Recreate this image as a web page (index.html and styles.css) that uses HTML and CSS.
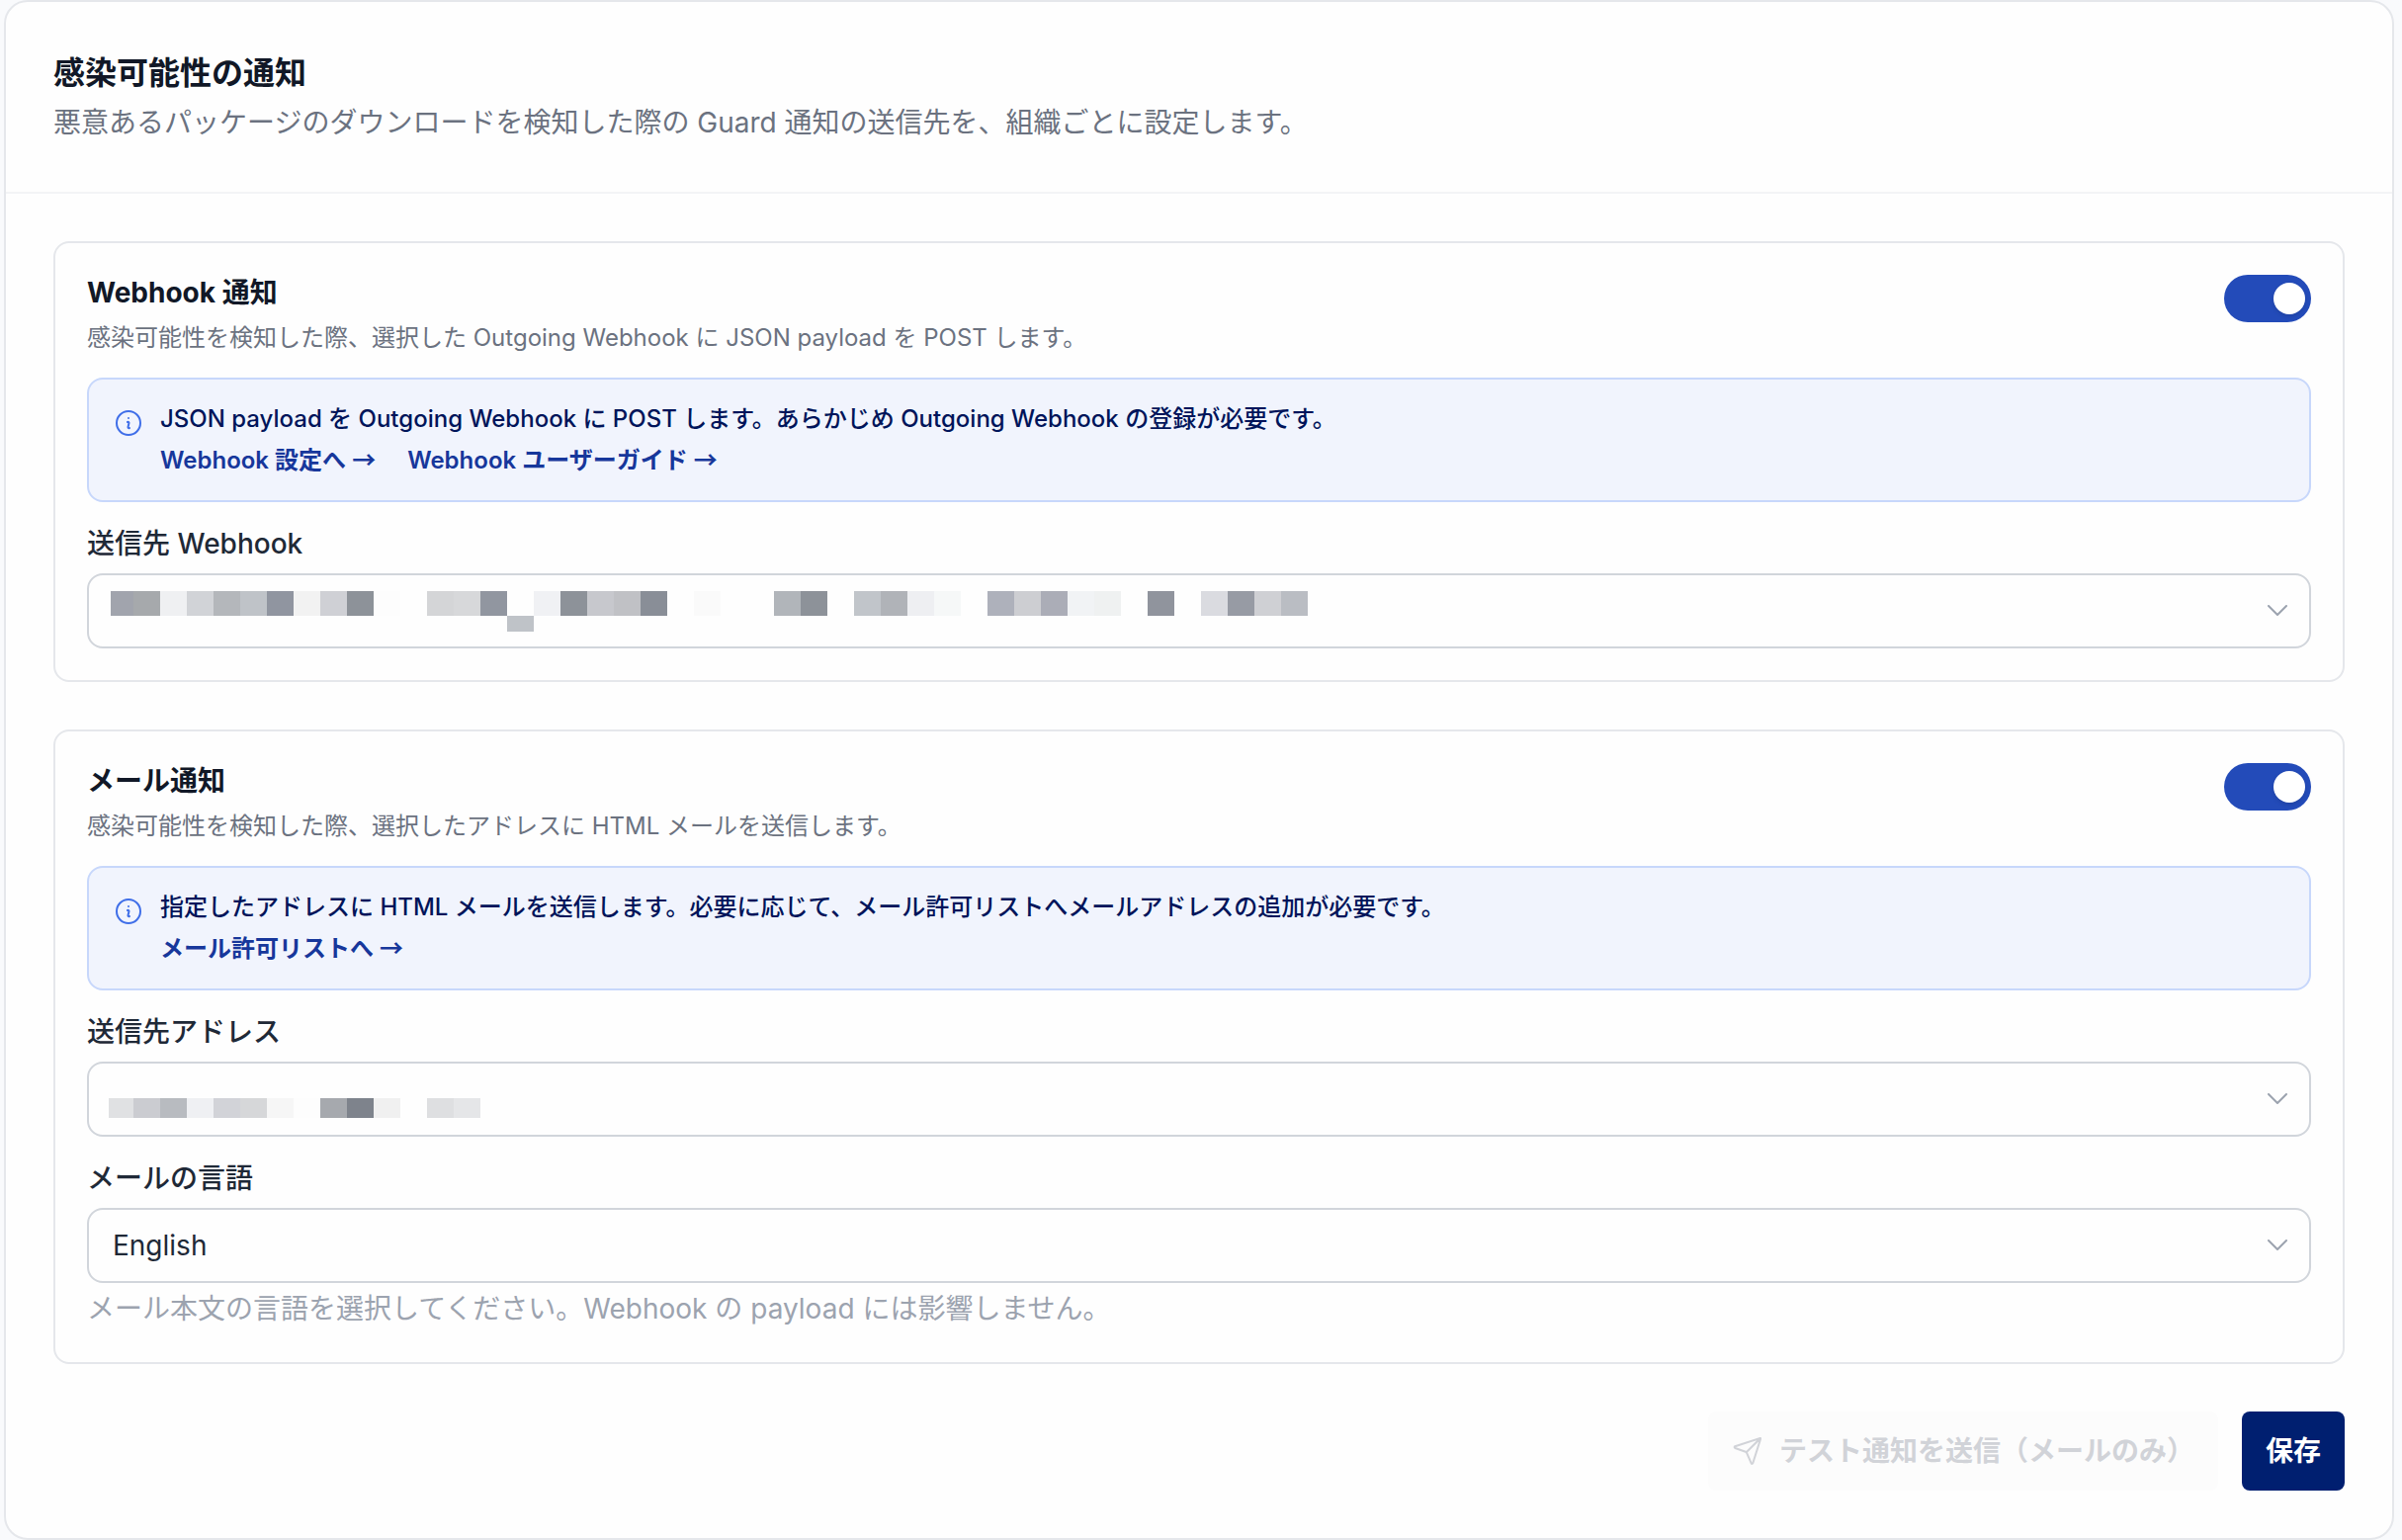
FILE: index.html
```html
<!DOCTYPE html>
<html lang="ja">
<head>
<meta charset="utf-8">
<meta name="viewport" content="width=device-width, initial-scale=1">
<title>感染可能性の通知</title>
<link rel="stylesheet" href="styles.css">
</head>
<body>
<main class="panel">
  <header class="panel-header">
    <h1 class="panel-title">感染可能性の通知</h1>
    <p class="panel-lead">悪意あるパッケージのダウンロードを検知した際の Guard 通知の送信先を、組織ごとに設定します。</p>
  </header>
  <form class="panel-body">
    <section class="card">
      <div class="card-header">
        <div>
          <h2 class="card-title"><label for="webhook-on">Webhook 通知</label></h2>
          <p class="card-lead">感染可能性を検知した際、選択した Outgoing Webhook に JSON payload を POST します。</p>
        </div>
        <input class="toggle" type="checkbox" role="switch" id="webhook-on" checked>
      </div>
      <div class="callout">
        <svg class="callout-icon" viewBox="0 0 24 24" aria-hidden="true"><path d="m11.25 11.25.041-.02a.75.75 0 0 1 1.063.852l-.708 2.836a.75.75 0 0 0 1.063.853l.041-.021M21 12a9 9 0 1 1-18 0 9 9 0 0 1 18 0Zm-9-3.75h.008v.008H12V8.25Z"/></svg>
        <div>
          <p class="callout-text">JSON payload を Outgoing Webhook に POST します。あらかじめ Outgoing Webhook の登録が必要です。</p>
          <div class="callout-links">
            <a href="#webhook-settings">Webhook 設定へ <span class="arrow">→</span></a>
            <a href="#webhook-guide">Webhook ユーザーガイド <span class="arrow">→</span></a>
          </div>
        </div>
      </div>
      <div class="field">
        <label class="field-label" for="webhook-target">送信先 Webhook</label>
        <div class="select-wrap">
          <select class="select" id="webhook-target"><option></option></select>
          <svg class="redacted" width="1236" height="72" aria-hidden="true" shape-rendering="crispEdges">
            <g>
              <rect x="22" y="16" width="23" height="25" fill="#a1a4ad"/><rect x="45" y="16" width="27" height="25" fill="#a6a9ac"/><rect x="72" y="16" width="27" height="25" fill="#eff0f2"/><rect x="99" y="16" width="27" height="25" fill="#d1d3d7"/><rect x="126" y="16" width="27" height="25" fill="#b4b7bb"/><rect x="153" y="16" width="27" height="25" fill="#bfc3c8"/><rect x="180" y="16" width="27" height="25" fill="#9095a0"/><rect x="207" y="16" width="27" height="25" fill="#f2f2f2"/><rect x="234" y="16" width="27" height="25" fill="#cfd0d5"/><rect x="261" y="16" width="27" height="25" fill="#8d9299"/><rect x="288" y="16" width="27" height="25" fill="#fdfdfd"/>
              <rect x="342" y="16" width="27" height="25" fill="#d4d5d7"/><rect x="369" y="16" width="27" height="25" fill="#d7d8da"/><rect x="396" y="16" width="27" height="25" fill="#9196a0"/><rect x="423" y="41" width="27" height="16" fill="#bfc3c8"/><rect x="450" y="16" width="27" height="25" fill="#f0f1f4"/><rect x="477" y="16" width="27" height="25" fill="#8d9299"/><rect x="504" y="16" width="27" height="25" fill="#c7c8cd"/><rect x="531" y="16" width="27" height="25" fill="#c0c1c5"/><rect x="558" y="16" width="27" height="25" fill="#898e97"/><rect x="612" y="16" width="27" height="25" fill="#fafafa"/>
              <rect x="693" y="16" width="27" height="25" fill="#b1b5ba"/><rect x="720" y="16" width="27" height="25" fill="#8d9299"/><rect x="774" y="16" width="27" height="25" fill="#c1c5ca"/><rect x="801" y="16" width="27" height="25" fill="#b0b3b8"/><rect x="828" y="16" width="27" height="25" fill="#eeeff2"/><rect x="855" y="16" width="27" height="25" fill="#f6f8f8"/>
              <rect x="909" y="16" width="27" height="25" fill="#aeb1bb"/><rect x="936" y="16" width="27" height="25" fill="#cdced2"/><rect x="963" y="16" width="27" height="25" fill="#abadb7"/><rect x="990" y="16" width="27" height="25" fill="#f1f3f5"/><rect x="1017" y="16" width="27" height="25" fill="#eff1f1"/><rect x="1071" y="16" width="27" height="25" fill="#90949d"/><rect x="1125" y="16" width="27" height="25" fill="#dadbe0"/><rect x="1152" y="16" width="27" height="25" fill="#979ba4"/><rect x="1179" y="16" width="27" height="25" fill="#cfd0d4"/><rect x="1206" y="16" width="27" height="25" fill="#babdc3"/>
            </g>
          </svg>
          <svg class="chevron" viewBox="0 0 20 12" aria-hidden="true"><path d="m1 1 9 9 9-9"/></svg>
        </div>
      </div>
    </section>

    <section class="card">
      <div class="card-header">
        <div>
          <h2 class="card-title"><label for="mail-on">メール通知</label></h2>
          <p class="card-lead">感染可能性を検知した際、選択したアドレスに HTML メールを送信します。</p>
        </div>
        <input class="toggle" type="checkbox" role="switch" id="mail-on" checked>
      </div>
      <div class="callout">
        <svg class="callout-icon" viewBox="0 0 24 24" aria-hidden="true"><path d="m11.25 11.25.041-.02a.75.75 0 0 1 1.063.852l-.708 2.836a.75.75 0 0 0 1.063.853l.041-.021M21 12a9 9 0 1 1-18 0 9 9 0 0 1 18 0Zm-9-3.75h.008v.008H12V8.25Z"/></svg>
        <div>
          <p class="callout-text">指定したアドレスに HTML メールを送信します。必要に応じて、メール許可リストへメールアドレスの追加が必要です。</p>
          <div class="callout-links">
            <a href="#mail-allowlist">メール許可リストへ <span class="arrow">→</span></a>
          </div>
        </div>
      </div>
      <div class="field">
        <label class="field-label" for="mail-target">送信先アドレス</label>
        <div class="select-wrap">
          <select class="select" id="mail-target"><option></option></select>
          <svg class="redacted" width="440" height="72" aria-hidden="true" shape-rendering="crispEdges">
            <g>
              <rect x="20" y="35" width="25" height="20" fill="#e0e1e3"/><rect x="45" y="35" width="27" height="20" fill="#cbccd1"/><rect x="72" y="35" width="27" height="20" fill="#b8bbc0"/><rect x="99" y="35" width="27" height="20" fill="#eff0f3"/><rect x="126" y="35" width="27" height="20" fill="#d2d3d8"/><rect x="153" y="35" width="27" height="20" fill="#d6d7d9"/><rect x="180" y="35" width="27" height="20" fill="#f6f6f6"/><rect x="207" y="35" width="27" height="20" fill="#fdfdfd"/><rect x="234" y="35" width="27" height="20" fill="#a6a9ae"/><rect x="261" y="35" width="27" height="20" fill="#7e838c"/><rect x="288" y="35" width="27" height="20" fill="#f0f0f0"/><rect x="342" y="35" width="27" height="20" fill="#dedfe1"/><rect x="369" y="35" width="27" height="20" fill="#e5e6e8"/>
            </g>
          </svg>
          <svg class="chevron" viewBox="0 0 20 12" aria-hidden="true"><path d="m1 1 9 9 9-9"/></svg>
        </div>
      </div>
      <div class="field">
        <label class="field-label" for="mail-lang">メールの言語</label>
        <div class="select-wrap">
          <select class="select" id="mail-lang" aria-describedby="mail-lang-help"><option>English</option><option>日本語</option></select>
          <svg class="chevron" viewBox="0 0 20 12" aria-hidden="true"><path d="m1 1 9 9 9-9"/></svg>
        </div>
        <p class="field-help" id="mail-lang-help">メール本文の言語を選択してください。Webhook の payload には影響しません。</p>
      </div>
    </section>

    <div class="actions">
      <button class="button button-test" type="button" disabled>
        <svg class="button-icon" viewBox="0 0 32 32" aria-hidden="true"><path d="M3.300 11.200 28 3.100Q29.300 2.700 29 4L21.300 28.200Q20.500 30 19.600 28.200L15.200 18.200Q14.900 17.200 13.900 16.800L3.300 13Q2 12 3.300 11.200ZM14.700 17.300 29 3"/></svg>
        テスト通知を送信（メールのみ）
      </button>
      <button class="button button-save" type="submit">保存</button>
    </div>
  </form>
</main>
</body>
</html>
```
FILE: styles.css
```css
* { box-sizing: border-box; }

body {
  margin: 0;
  padding: 0 8px 4px 4px;
  background: #f9fafc;
  color: #111827;
  font-family: Inter, "Noto Sans CJK JP", sans-serif;
  font-size: 28px;
  line-height: 36px;
}

h1, h2, p { margin: 0; }

.panel {
  background: #fefefe;
  border: 2px solid #e5e7eb;
  border-radius: 24px;
}

.panel-header {
  padding: 48px 48px 52px;
  border-bottom: 2px solid #f3f4f6;
}

.panel-title {
  margin-bottom: 8px;
  font-size: 32px;
  line-height: 48px;
  font-weight: 700;
}

.panel-lead { color: #6b7280; }

.panel-body {
  display: flex;
  flex-direction: column;
  gap: 48px;
  padding: 48px;
}

.card {
  display: flex;
  flex-direction: column;
  gap: 24px;
  padding: 32px;
  border: 2px solid #e5e7eb;
  border-radius: 16px;
}

.card-header {
  display: flex;
  align-items: flex-start;
  justify-content: space-between;
  gap: 24px;
}

.card-title {
  margin-bottom: 12px;
  font-size: 28px;
  font-weight: 700;
}

.card-lead {
  color: #6b7280;
  font-size: 24px;
  line-height: 32px;
}

.toggle {
  appearance: none;
  flex: none;
  display: flex;
  align-items: center;
  justify-content: flex-end;
  width: 88px;
  height: 48px;
  margin: 0;
  padding: 0 6px;
  border-radius: 24px;
  background: #234bb9;
}

.toggle::before {
  content: "";
  width: 32px;
  height: 32px;
  border-radius: 50%;
  background: #fff;
  box-shadow: 0 2px 4px rgba(0, 0, 0, 0.12);
}

.toggle:not(:checked) {
  justify-content: flex-start;
  background: #d1d5db;
}

.callout {
  display: flex;
  align-items: flex-start;
  gap: 16px;
  padding: 20px 24px;
  border: 2px solid #c7d7fb;
  border-radius: 16px;
  background: #f1f4fd;
  color: #00145a;
  font-size: 24px;
  line-height: 40px;
}

.callout-icon {
  flex: none;
  width: 32px;
  height: 32px;
  margin-top: 8px;
  fill: none;
  stroke: #3f6ee8;
  stroke-width: 1.5;
  stroke-linecap: round;
  stroke-linejoin: round;
}

.callout-text { font-weight: 500; }

.callout-links {
  display: flex;
  flex-wrap: wrap;
  gap: 0 32px;
}

.callout-links a {
  color: #17379b;
  font-weight: 600;
  text-decoration: none;
}

.arrow { font-family: "Noto Sans CJK JP", sans-serif; }

.field {
  display: flex;
  flex-direction: column;
}

.field-label {
  margin-bottom: 12px;
  color: #1f2937;
  font-weight: 500;
}

.field-help {
  padding: 8px 0 4px;
  color: #9ca3af;
}

.select-wrap {
  position: relative;
  display: grid;
}

.select {
  appearance: none;
  width: 100%;
  height: 76px;
  padding: 0 72px 0 24px;
  border: 2px solid #d1d5db;
  border-radius: 16px;
  background: #fefefe;
  color: #1f2937;
  font: inherit;
}

/* Masked value, drawn over the closed select */
.redacted {
  position: absolute;
  top: 2px;
  left: 2px;
  pointer-events: none;
}

.chevron {
  position: absolute;
  top: 32px;
  right: 24px;
  width: 20px;
  height: 12px;
  fill: none;
  stroke: #9ca3af;
  stroke-width: 2;
  stroke-linecap: round;
  stroke-linejoin: round;
  pointer-events: none;
}

.actions {
  display: flex;
  flex-wrap: wrap;
  justify-content: flex-end;
  gap: 24px;
}

.button {
  display: flex;
  align-items: center;
  justify-content: center;
  gap: 16px;
  height: 80px;
  padding: 0 24px;
  border: 0;
  border-radius: 8px;
  font: inherit;
  font-weight: 700;
}

.button-test {
  background: #fcfcfc;
  color: #d1d3d8;
}

.button-icon {
  width: 32px;
  height: 32px;
  fill: none;
  stroke: currentColor;
  stroke-width: 2;
  stroke-linecap: round;
  stroke-linejoin: round;
}

.button-save {
  background: #001f70;
  color: #fff;
}
```
